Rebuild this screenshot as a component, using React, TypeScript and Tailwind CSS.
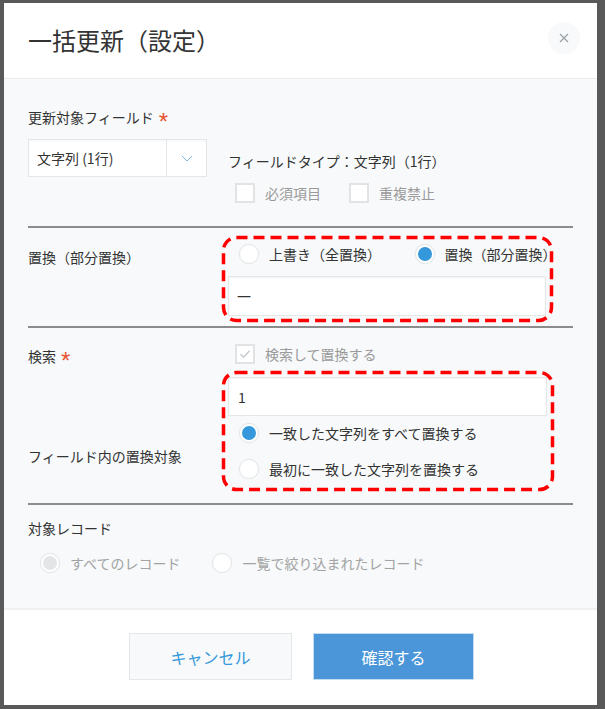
import React from "react";

const font = { fontFamily: '"Noto Sans CJK JP", "Noto Sans", sans-serif' };

function Radio({ checked, disabled }: { checked?: boolean; disabled?: boolean }) {
  return (
    <span className="w-[20px] h-[20px] rounded-full bg-white border border-[#e3e7e8] shadow-[0_0_2px_rgba(0,0,0,0.05)] flex items-center justify-center shrink-0">
      {checked && (
        <span className={`w-[14px] h-[14px] rounded-full ${disabled ? "bg-[#e3e5e6]" : "bg-[#3498db]"}`} />
      )}
    </span>
  );
}

function Checkbox({ checked }: { checked?: boolean }) {
  return (
    <span className="w-[20px] h-[20px] bg-white border-2 border-[#e1e3e4] flex items-center justify-center shrink-0">
      {checked && (
        <svg width="12" height="10" viewBox="0 0 12 10">
          <path d="M1.5 5.2 L4.6 8.2 L10.5 1.8" fill="none" stroke="#c9cccf" strokeWidth="1.6" />
        </svg>
      )}
    </span>
  );
}

function Dashed({ children, className }: { children: React.ReactNode; className?: string }) {
  return (
    <div className={`relative ${className ?? ""}`}>
      <svg className="absolute inset-0 w-full h-full pointer-events-none overflow-visible">
        <rect x="1.5" y="1.5" width="calc(100% - 3px)" height="calc(100% - 3px)" rx="13" ry="13" fill="none" stroke="#ff0000" strokeWidth="3.5" strokeDasharray="11 6" />
      </svg>
      {children}
    </div>
  );
}

function Asterisk() {
  return (
    <span className="text-[#e8522f] text-[24px] leading-none ml-[5px] relative top-[5px] font-['Liberation_Sans',sans-serif]">
      *
    </span>
  );
}

function Divider() {
  return <div className="h-[2px] bg-[#8c8c8c]" />;
}

export default function App() {
  return (
    <div className="min-h-[709px] bg-[#595959] pt-[3px] pl-[4px]" style={font}>
      <div className="w-[593px] h-[702px] bg-white flex flex-col text-[#333] text-[14px] leading-[20px]">
        <header className="h-[76px] border-b border-[#e9ecee] flex justify-between pl-[24px] pr-[17px] shrink-0">
          <h1 className="text-[24px] leading-[32px] pt-[21px] font-normal text-[#333]">一括更新（設定）</h1>
          <button className="mt-[19px] w-[32px] h-[32px] rounded-full bg-[#f7f9fa] flex items-center justify-center">
            <svg width="10" height="10" viewBox="0 0 10 10">
              <path d="M1 1 L9 9 M9 1 L1 9" stroke="#9aa0a4" strokeWidth="1.2" />
            </svg>
          </button>
        </header>

        <main className="flex-1 bg-[#f7f9fa] px-[24px]">
          {/* field */}
          <section className="pt-[28px] pb-[23px]">
            <div className="flex items-center h-[20px]">
              更新対象フィールド<Asterisk />
            </div>
            <div className="flex mt-[12px]">
              <div className="w-[179px] h-[38px] bg-white border border-[#e3e7e8] shadow-[inset_0_1px_2px_rgba(0,0,0,0.04)] flex">
                <div className="flex-1 flex items-center pl-[8px]">文字列 (1行)</div>
                <div className="w-[40px] border-l border-[#e3e7e8] flex items-center justify-center">
                  <svg width="12" height="7" viewBox="0 0 12 7">
                    <path d="M1 1 L6 6 L11 1" fill="none" stroke="#7fb6e3" strokeWidth="1" />
                  </svg>
                </div>
              </div>
              <div className="ml-[21px] pt-[12px]">
                <div>フィールドタイプ：文字列（1行）</div>
                <div className="flex items-center mt-[12px] pl-[7px] text-[#9a9a9a]">
                  <Checkbox />
                  <span className="ml-[10px]">必須項目</span>
                  <span className="ml-[28px]"><Checkbox /></span>
                  <span className="ml-[10px]">重複禁止</span>
                </div>
              </div>
            </div>
          </section>
          <Divider />

          {/* replace mode */}
          <section className="flex pt-[8px] pb-[4px]">
            <div className="w-[200px] pt-[11px]">置換（部分置換）</div>
            <Dashed className="ml-[-6px] w-[331px] pt-[8px] pl-[6px] pb-[6px]">
              <div className="flex items-center pl-[11px]">
                <Radio />
                <span className="ml-[10px]">上書き（全置換）</span>
                <span className="ml-[37px]"><Radio checked /></span>
                <span className="ml-[10px]">置換（部分置換）</span>
              </div>
              <div className="mt-[12px] w-[318px] h-[40px] bg-white border border-[#e3e7e8] shadow-[inset_0_1px_2px_rgba(0,0,0,0.05)] flex items-center pl-[8px]">
                一
              </div>
            </Dashed>
          </section>
          <Divider />

          {/* search */}
          <section className="flex pb-[12px]">
            <div className="w-[200px] pt-[18px]">
              <div className="flex items-center h-[20px]">
                検索<Asterisk />
              </div>
              <div className="mt-[80px]">フィールド内の置換対象</div>
            </div>
            <div className="pt-[16px]">
              <div className="flex items-center pl-[7px] text-[#9a9a9a]">
                <Checkbox checked />
                <span className="ml-[10px]">検索して置換する</span>
              </div>
              <Dashed className="mt-[7px] ml-[-6px] w-[332px] pt-[6px] pl-[6px] pb-[12px]">
                <div className="w-[319px] h-[39px] bg-white border border-[#e3e7e8] shadow-[inset_0_1px_2px_rgba(0,0,0,0.05)] flex items-center pl-[9px]">
                  1
                </div>
                <div className="flex items-center pl-[11px] mt-[7px]">
                  <Radio checked />
                  <span className="ml-[10px]">一致した文字列をすべて置換する</span>
                </div>
                <div className="flex items-center pl-[11px] mt-[16px]">
                  <Radio />
                  <span className="ml-[10px]">最初に一致した文字列を置換する</span>
                </div>
              </Dashed>
            </div>
          </section>
          <Divider />

          {/* records */}
          <section className="pt-[13px]">
            <div>対象レコード</div>
            <div className="flex items-center mt-[15px] pl-[12px] text-[#a3a3a3]">
              <Radio checked disabled />
              <span className="ml-[10px]">すべてのレコード</span>
              <span className="ml-[32px]"><Radio /></span>
              <span className="ml-[10px]">一覧で絞り込まれたレコード</span>
            </div>
          </section>
        </main>

        <footer className="h-[97px] border-t-2 border-[#eef0f1] flex justify-center gap-[21px] pt-[23px] pl-[2px] shrink-0">
          <button className="w-[163px] h-[47px] bg-[#f7f9fa] border border-[#e3e7e8] text-[#3498db] text-[16px]">
            キャンセル
          </button>
          <button className="w-[161px] h-[47px] bg-[#4a96d9] border border-[#c3dcf1] text-white text-[16px]">
            確認する
          </button>
        </footer>
      </div>
    </div>
  );
}
